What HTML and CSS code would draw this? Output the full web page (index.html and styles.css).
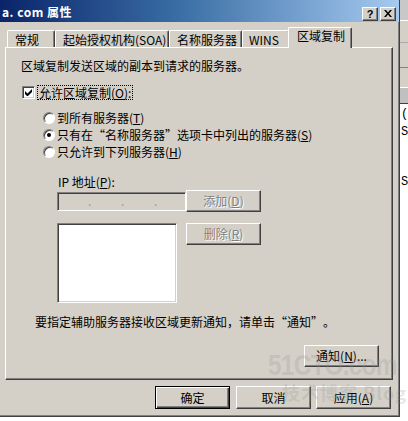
FILE: index.html
```html
<!DOCTYPE html>
<html>
<head>
<meta charset="utf-8">
<title>属性</title>
<link rel="stylesheet" href="styles.css">
</head>
<body>
<div class="screen">
  <div class="window">
    <div class="titlebar">
      <span class="title">a. com 属性</span>
      <div class="tb-buttons">
        <span class="tb-btn help">?</span>
        <span class="tb-btn close"><svg width="8" height="7" viewBox="0 0 8 7"><path d="M0 0h2l2 2.5L6 0h2L5 3.5 8 7H6L4 4.5 2 7H0l3-3.5z" fill="#000"/></svg></span>
      </div>
    </div>
    <div class="body">
      <div class="tabs">
        <div class="tab w1">常规</div>
        <div class="tab w2">起始授权机构(SOA)</div>
        <div class="tab w3">名称服务器</div>
        <div class="tab w4">WINS</div>
        <div class="tab sel">区域复制</div>
      </div>
      <div class="panel">
        <div class="desc">区域复制发送区域的副本到请求的服务器。</div>
        <div class="check-row">
          <span class="checkbox"><svg width="7" height="7" viewBox="0 0 7 7"><path d="M0 2v3l2 2h1l4-4V0L2.5 4.5z" fill="#000"/></svg></span>
          <span class="focus">允许区域复制(<u>O</u>):</span>
        </div>
        <div class="radios">
          <div class="radio-row"><span class="radio"></span><span>到所有服务器(<u>T</u>)</span></div>
          <div class="radio-row"><span class="radio on"></span><span>只有在<span class="q open">“</span>名称服务器<span class="q close">”</span>选项卡中列出的服务器(<u>S</u>)</span></div>
          <div class="radio-row"><span class="radio"></span><span>只允许到下列服务器(<u>H</u>)</span></div>
        </div>
        <div class="ip-label">IP 地址(<u>P</u>):</div>
        <div class="ip-row">
          <div class="ipbox"><span>.</span><span>.</span><span>.</span></div>
          <button class="btn disabled" disabled>添加(<u>D</u>)</button>
        </div>
        <div class="list-row">
          <div class="listbox"></div>
          <button class="btn disabled" disabled>删除(<u>R</u>)</button>
        </div>
        <div class="notify-text">要指定辅助服务器接收区域更新通知，请单击<span class="q open">“</span>通知<span class="q close">”</span>。</div>
        <div class="notify-row">
          <button class="btn">通知(<u>N</u>)...</button>
        </div>
      </div>
      <div class="footer">
        <button class="btn default">确定</button>
        <button class="btn">取消</button>
        <button class="btn">应用(<u>A</u>)</button>
      </div>
    </div>
  </div>
  <div class="other">
    <div class="o-band b1"></div>
    <div class="o-band b2"></div>
    <div class="o-band b3"></div>
    <div class="o-band b4"></div>
    <div class="o-band b5"></div>
    <div class="o-list">
      <span class="o-t t1">(</span>
      <span class="o-t t2">S</span>
      <span class="o-t t3">S</span>
    </div>
  </div>
</div>
<div class="watermark">
  <div class="wm1">51CTO.com</div>
  <div class="wm2">技术博客 Blog</div>
</div>
</body>
</html>
```

FILE: styles.css
```css
* { box-sizing: border-box; }
html, body { margin: 0; padding: 0; }
body {
  width: 408px;
  height: 421px;
  overflow: hidden;
  background: #fff;
  font-family: "Noto Sans CJK SC", "Liberation Sans", sans-serif;
  font-size: 12px;
  line-height: 16px;
  color: #000;
  position: relative;
}
u { text-decoration: underline; text-underline-offset: 1px; }
.q { display: inline-block; width: 12px; }
.q.open { text-align: right; }
.q.close { text-align: left; }

.screen { display: flex; align-items: flex-start; }

.window {
  width: 400px;
  height: 417px;
  background: #d4d0c8;
  border-right: 1px solid #404040;
  border-bottom: 1px solid #404040;
  box-shadow: inset -1px -1px 0 #808080;
  display: flex;
  flex-direction: column;
  flex: none;
}

/* title bar */
.titlebar {
  height: 22px;
  background: linear-gradient(to right, #0a246a 0%, #3a6ea5 45%, #a6caf0 100%);
  display: flex;
  align-items: center;
  padding: 1px 3px 0 2px;
  color: #fff;
  font-weight: bold;
}
.title { letter-spacing: 0.5px; }
.tb-buttons { margin-left: auto; display: flex; gap: 2px; margin-top: 4px; }
.tb-btn {
  width: 16px;
  height: 14px;
  background: #d4d0c8;
  border: 1px solid;
  border-color: #fff #404040 #404040 #fff;
  box-shadow: inset -1px -1px 0 #808080;
  color: #000;
  display: flex;
  align-items: center;
  justify-content: center;
  font-family: "Liberation Sans", sans-serif;
  font-size: 11px;
  font-weight: bold;
  line-height: 12px;
}

/* body */
.body {
  padding: 5px 6px 0 5px;
  display: flex;
  flex-direction: column;
}
.tabs {
  height: 20px;
  display: flex;
  align-items: flex-end;
  padding-left: 2px;
}
.tab {
  height: 17px;
  padding: 1px 0 0 7px;
  background: #d4d0c8;
  border-top: 1px solid #fff;
  border-left: 1px solid #fff;
  border-right: 1px solid #404040;
  box-shadow: inset -1px 0 0 #808080;
  border-radius: 2px 2px 0 0;
  white-space: nowrap;
  overflow: hidden;
}
.w1 { width: 48px; }
.w2 { width: 114px; }
.w3 { width: 73px; }
.w4 { width: 48px; padding-left: 6px; }
.tab.sel {
  width: 64px;
  height: 21px;
  margin: 0 -2px -1px -2px;
  padding: 0 0 0 8px;
  position: relative;
  z-index: 1;
}

.panel {
  height: 333px;
  border: 1px solid;
  border-color: #fff #404040 #404040 #fff;
  box-shadow: inset -1px -1px 0 #808080;
  padding: 0 0 0 15px;
  display: flex;
  flex-direction: column;
  align-items: flex-start;
}
.desc { margin-top: 10px; }

.check-row {
  margin-top: 10px;
  height: 16px;
  display: flex;
  align-items: center;
}
.checkbox {
  width: 13px;
  height: 13px;
  margin-left: 1px;
  background: #fff;
  border: 1px solid;
  border-color: #808080 #fff #fff #808080;
  box-shadow: inset 1px 1px 0 #404040, inset -1px -1px 0 #d4d0c8;
  display: flex;
  align-items: center;
  justify-content: center;
}
.focus {
  margin-left: 2px;
  padding: 0 1px;
  height: 15px;
  line-height: 14px;
  border: 1px dotted #000;
}

.radios { margin-top: 9px; display: flex; flex-direction: column; }
.radio-row {
  height: 17px;
  display: flex;
  align-items: center;
  padding-left: 22px;
  gap: 2px;
  white-space: nowrap;
}
.radio {
  width: 12px;
  height: 12px;
  border-radius: 50%;
  background: #fff;
  border: 1px solid;
  border-color: #808080 #fff #fff #808080;
  box-shadow: inset 1px 1px 0 #404040;
  display: flex;
  align-items: center;
  justify-content: center;
  flex: none;
}
.radio.on::after {
  content: "";
  width: 4px;
  height: 4px;
  border-radius: 50%;
  background: #000;
}

.ip-label { margin: 14px 0 0 37px; }
.ip-row {
  margin: 0 0 0 36px;
  height: 22px;
  display: flex;
  align-items: center;
}
.ipbox {
  width: 129px;
  height: 19px;
  background: #d4d0c8;
  border: 1px solid;
  border-color: #808080 #fff #fff #808080;
  box-shadow: inset 1px 1px 0 #404040, inset -1px -1px 0 #d4d0c8;
  display: flex;
  align-items: center;
  padding-left: 30px;
  gap: 30px;
  color: #9a9890;
}
.ipbox span { width: 3px; }

.list-row {
  margin: 11px 0 0 36px;
  display: flex;
  align-items: flex-start;
}
.listbox {
  width: 120px;
  height: 80px;
  margin-right: 9px;
  background: #fff;
  border: 1px solid;
  border-color: #808080 #fff #fff #808080;
  box-shadow: inset 1px 1px 0 #404040, inset -1px -1px 0 #d4d0c8;
}

.notify-text { margin: 11px 0 0 14px; white-space: nowrap; }
.notify-row {
  align-self: stretch;
  margin-top: 15px;
  display: flex;
  justify-content: flex-end;
  padding-right: 13px;
}

/* buttons */
.btn {
  width: 75px;
  height: 22px;
  padding: 0;
  margin: 0;
  font: inherit;
  line-height: 16px;
  color: #000;
  background: #d4d0c8;
  border: 1px solid;
  border-color: #fff #404040 #404040 #fff;
  box-shadow: inset -1px -1px 0 #808080;
  display: flex;
  align-items: center;
  justify-content: center;
  white-space: nowrap;
}
.btn.disabled { color: #808080; text-shadow: 1px 1px 0 #fff; }
.btn.default {
  border-color: #000;
  box-shadow: inset 1px 1px 0 #fff, inset -1px -1px 0 #404040, inset -2px -2px 0 #808080;
}

.footer {
  margin-top: 6px;
  display: flex;
  justify-content: flex-end;
  gap: 5px;
  padding-right: 2px;
}
.footer .btn { height: 23px; }
.footer .btn.default { margin-right: 1px; }

/* neighbouring window at right edge */
.other {
  width: 8px;
  height: 421px;
  background: #fff;
  display: flex;
  flex-direction: column;
  overflow: hidden;
  flex: none;
}
.o-band { background: #d4d0c8; border-bottom: 1px solid #fff; }
.b1 { height: 21px; background: #c8c8c8; }
.b2 { height: 22px; border-bottom-color: #aaa; }
.b3 { height: 25px; border-bottom-color: #808080; }
.b4 { height: 20px; border-bottom-color: #fff; }
.b5 { height: 16px; border-bottom: 1px solid #404040; background: #c0c0c0; }
.o-list { position: relative; flex: 1; }
.o-t {
  position: absolute;
  left: 1px;
  font-family: "Liberation Mono", monospace;
  font-size: 12px;
  line-height: 12px;
}
.t1 { top: 4px; }
.t2 { top: 22px; }
.t3 { top: 72px; }

/* faint watermark over the dialog */
.watermark {
  position: absolute;
  left: 268px;
  top: 349px;
  color: rgba(140, 140, 140, 0.22);
  pointer-events: none;
  font-weight: bold;
}
.wm1 {
  font-family: "Liberation Sans", sans-serif;
  font-size: 30px;
  line-height: 32px;
  letter-spacing: -1px;
  transform: scaleX(0.82);
  transform-origin: left;
}
.wm2 {
  margin-left: 14px;
  font-size: 18px;
  line-height: 22px;
  letter-spacing: 1px;
}
```
